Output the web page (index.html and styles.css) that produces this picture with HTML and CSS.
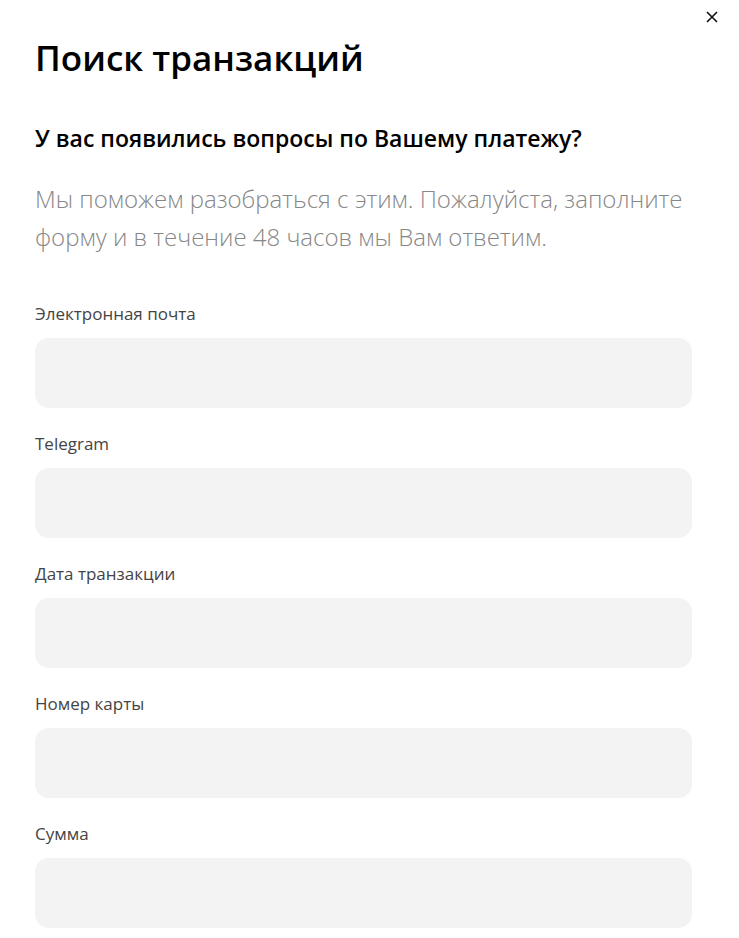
FILE: index.html
```html
<!DOCTYPE html>
<html lang="ru">
<head>
<meta charset="utf-8">
<title>Поиск транзакций</title>
<link rel="stylesheet" href="styles.css">
</head>
<body>
<div class="modal">
  <button class="close" aria-label="Закрыть">
    <svg width="12" height="12" viewBox="0 0 12 12"><path d="M1 1L11 11M11 1L1 11" stroke="#111" stroke-width="1.6" fill="none"/></svg>
  </button>
  <h1 class="title">Поиск транзакций</h1>
  <h2 class="subtitle">У вас появились вопросы по Вашему платежу?</h2>
  <p class="lead">Мы поможем разобраться с этим. Пожалуйста, заполните форму и в течение 48 часов мы Вам ответим.</p>
  <form class="form">
    <label class="field"><span class="label">Электронная почта</span><input class="input" type="text"></label>
    <label class="field"><span class="label">Telegram</span><input class="input" type="text"></label>
    <label class="field"><span class="label">Дата транзакции</span><input class="input" type="text"></label>
    <label class="field"><span class="label">Номер карты</span><input class="input" type="text"></label>
    <label class="field"><span class="label">Сумма</span><input class="input" type="text"></label>
  </form>
</div>
</body>
</html>
```

FILE: styles.css
```css
html, body {
  margin: 0;
  padding: 0;
  background: #fff;
}
body {
  font-family: "Open Sans", "Noto Sans", sans-serif;
  color: #000;
}
.modal {
  position: relative;
  padding: 34px 47px 0 35px;
}
.close {
  position: absolute;
  top: 10px;
  right: 20px;
  width: 14px;
  height: 14px;
  padding: 0;
  border: 0;
  background: none;
  display: flex;
  align-items: center;
  justify-content: center;
}
.title {
  margin: 0;
  font-size: 35px;
  line-height: 48px;
  font-weight: 600;
}
.subtitle {
  margin: 41px 0 0;
  font-size: 23px;
  line-height: 30px;
  font-weight: 600;
}
.lead {
  margin: 27px 0 0;
  font-size: 24px;
  line-height: 38px;
  font-weight: 300;
  color: #878787;
}
.form {
  display: flex;
  flex-direction: column;
  gap: 26px;
  margin-top: 48px;
}
.field {
  display: flex;
  flex-direction: column;
  gap: 14px;
}
.label {
  font-size: 17px;
  line-height: 20px;
  color: #444;
}
.input {
  height: 70px;
  border: 0;
  border-radius: 14px;
  background: #f3f3f3;
  padding: 0 20px;
  box-sizing: border-box;
  font: inherit;
  outline: none;
}
```
